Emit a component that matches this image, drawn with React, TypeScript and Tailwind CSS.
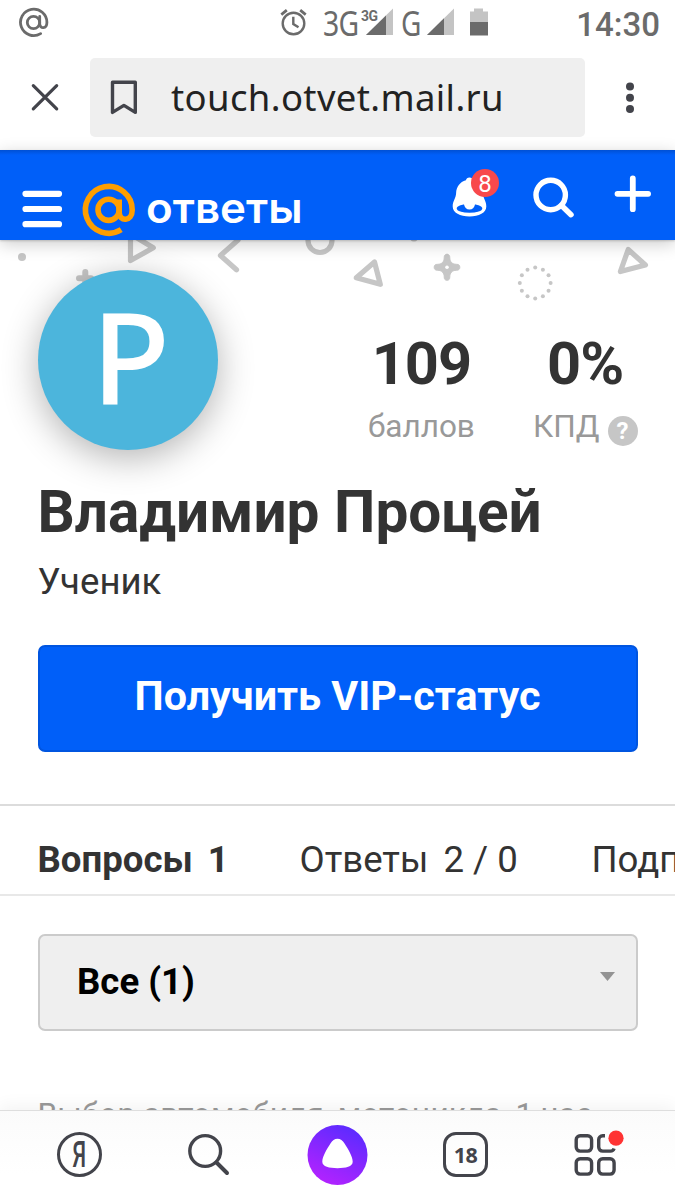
const STATUS = '#6b6b6b';
const INK = '#43444b';

function StatusBar() {
  return (
    <div className="flex h-[46px] shrink-0 items-center text-[#6b6b6b]">
      <svg className="ml-[18px] shrink-0" width="32" height="46" viewBox="0 0 32 46" fill="none" stroke={STATUS} strokeWidth="2.8" strokeLinecap="round">
        <circle cx="15.5" cy="22.5" r="6.2" />
        <path d="M21.7 16.4V23.6c0 5.6 7.2 5.6 7.2-1.1A13.2 13.2 0 1 0 22.6 33.6" />
      </svg>
      <svg className="ml-[229px] shrink-0" width="30" height="46" viewBox="279 0 30 46" fill="none" stroke={STATUS} strokeWidth="2.4">
        <circle cx="293.5" cy="23.5" r="10.8" />
        <path d="M293.3 16.8v7.2l5.2 3.2" />
        <path d="M281.3 14.6l5.5-4.4M305.7 14.6l-5.5-4.4" strokeWidth="2.8" />
      </svg>
      <span className="ml-[14px] w-[38px] shrink-0 text-[35px] leading-[46px]">
        <span className="block w-[50px] origin-left scale-x-[0.81] font-['Noto_Sans'] tracking-[-1px]">3G</span>
      </span>
      <span className="z-10 -mt-[15px] w-[16px] shrink-0 text-[15.5px] leading-[16px] font-bold tracking-[-0.5px]">
        <span className="block origin-left scale-x-90">3G</span>
      </span>
      <svg className="-ml-[11px] shrink-0" width="28" height="46" viewBox="366 0 28 46">
        <path d="M393 8.5V35h-27z" fill="#c4c4c4" />
        <path d="M386 15.5V35h-20z" fill={STATUS} />
      </svg>
      <span className="ml-[7px] w-[22px] shrink-0 text-[35px] leading-[46px]">
        <span className="block w-[28px] origin-left scale-x-[0.8] font-['Noto_Sans']">G</span>
      </span>
      <svg className="ml-[4px] shrink-0" width="63" height="46" viewBox="426 0 63 46">
        <path d="M453 8.5V35h-27z" fill="#c4c4c4" />
        <path d="M443 18.2V35h-17z" fill={STATUS} />
        <path d="M469 11.5h4v-3h9v3h5V22h-18z" fill="#c4c4c4" />
        <path d="M469 22h18v13.5h-18z" fill={STATUS} />
      </svg>
      <span className="mr-[15px] ml-auto pt-[3px] text-[33px] leading-[46px] font-medium">14:30</span>
    </div>
  );
}

function AddressBar() {
  return (
    <div className="flex h-[104px] shrink-0 items-start pt-[12px]">
      <svg className="ml-[30px] shrink-0" width="30" height="79" viewBox="30 58 30 79" fill="none" stroke={INK} strokeWidth="3.2" strokeLinecap="round">
        <path d="M33.3 85.6l23.4 23.2M56.7 85.6l-23.4 23.2" />
      </svg>
      <div className="ml-[30px] flex h-[79px] w-[495px] shrink-0 items-center rounded-[5px] bg-[#efefef]">
        <svg className="ml-[20px] shrink-0" width="28" height="36" viewBox="110 80 28 36" fill="none" stroke={INK} strokeWidth="3.4" strokeLinejoin="round">
          <path d="M112.5 82.2h22.8v30.2l-11.4-7-11.4 7z" />
        </svg>
        <span className="ml-[33px] font-['Noto_Sans'] text-[36.5px] leading-[79px] tracking-[0.37px] text-[#222]">touch.otvet.mail.ru</span>
      </div>
      <svg className="ml-[39px] shrink-0" width="12" height="79" viewBox="624 58 12 79" fill={INK}>
        <circle cx="630" cy="86.5" r="4" />
        <circle cx="630" cy="97.7" r="4" />
        <circle cx="630" cy="109" r="4" />
      </svg>
    </div>
  );
}

function SiteHeader() {
  return (
    <div className="relative z-10 flex h-[90px] shrink-0 items-start bg-[linear-gradient(to_bottom,#0050d4,#005ff9_5px)] shadow-[0_4px_16px_rgba(0,0,0,0.2),0_1px_2px_rgba(0,0,0,0.18)]">
      <svg className="shrink-0" width="140" height="90" viewBox="0 150 140 90" fill="none">
        <path d="M25.5 193.8h33.5M25.5 209h33.5M25.5 224.2h33.5" stroke="#fff" strokeWidth="6.2" strokeLinecap="round" />
        <g stroke="#ff9e00" strokeWidth="5.6">
          <circle cx="108.6" cy="209.8" r="10.6" />
          <path d="M119.2 199.5v13c0 9.4 13 9.4 13-2.6a23.4 23.4 0 1 0-11 19.8" />
        </g>
      </svg>
      <span className="ml-[6px] w-[170px] pt-[30px] font-['Inter'] text-[42px] leading-[56px] font-semibold text-white">
        <span className="inline-block origin-left scale-x-[1.045]">ответы</span>
      </span>
      <div className="relative ml-auto h-[90px] w-[235px]">
        <svg width="235" height="90" viewBox="440 150 235 90" fill="none">
          <path fill="#fff" d="M469.5 177.5c2.1 0 3.2 1.2 3.6 2.8 6 1.8 9.6 6.4 9.8 13 .2 5.2 3.4 7.7 3.4 13.2 0 6.2-7.4 10-16.8 10s-16.8-3.8-16.8-10c0-5.5 3.2-8 3.4-13.2.2-6.6 3.8-11.2 9.8-13 .4-1.6 1.5-2.8 3.6-2.8z" />
          <ellipse cx="469.5" cy="208.4" rx="12.8" ry="4.3" fill="#005ff9" />
          <circle cx="469.5" cy="204.2" r="5.4" fill="#fff" />
          <circle cx="550.7" cy="195" r="14.7" stroke="#fff" strokeWidth="5.4" />
          <path d="M561.5 205.5l9.5 9.2" stroke="#fff" strokeWidth="5.5" strokeLinecap="round" />
          <path d="M617.5 193.8h30.6M632.8 178.4v30.8" stroke="#fff" strokeWidth="5.8" strokeLinecap="round" />
        </svg>
        <span className="absolute top-[19px] left-[31px] flex h-[28px] w-[28px] items-center justify-center rounded-full bg-[#f8494c] pt-[2px] text-[24px] leading-[28px] text-white">8</span>
      </div>
    </div>
  );
}

const DOTS = Array.from({ length: 12 }, (_, i) => {
  const a = (i * Math.PI) / 6;
  return [535.2 + 15.4 * Math.sin(a), 283 - 15.4 * Math.cos(a)];
});

function Confetti() {
  return (
    <svg className="absolute top-0 left-0" width="675" height="80" viewBox="0 240 675 80" fill="none" stroke="#c6c6c6" strokeWidth="5.2" strokeLinecap="round" strokeLinejoin="round">
      <circle cx="22" cy="257" r="4" fill="#c6c6c6" stroke="none" />
      <path d="M130.5 234v26.6l22.8-12.8z" />
      <path d="M238 240l-17.5 15.5 16 14.2" />
      <circle cx="320" cy="240.5" r="12" />
      <path d="M374.5 262l5.8 22.3-24-6.5z" />
      <path d="M628.2 249.5l17.2 15.5-25 6.5z" />
      <path d="M85.3 272v10M79 278.3h12" strokeWidth="6" />
      <path fill="#c6c6c6" strokeWidth="1" d="M447 254.3c2 0 2.8 1.2 2.8 3.5 0 4 2.5 6.5 6.5 6.5 2.5 0 3.5 1.1 3.5 3s-1 3-3.5 3c-4 0-6.5 2.5-6.5 6.5 0 2.3-.8 3.5-2.8 3.5s-2.8-1.2-2.8-3.5c0-4-2.5-6.5-6.5-6.5-2.5 0-3.5-1.1-3.5-3s1-3 3.5-3c4 0 6.5-2.5 6.5-6.5 0-2.3.8-3.5 2.8-3.5z" />
      <circle cx="447" cy="267.3" r="1.8" fill="#fff" stroke="none" />
      <circle cx="414" cy="237.5" r="4" fill="#c6c6c6" stroke="none" />
      {DOTS.map(([x, y], i) => (
        <circle key={i} cx={x} cy={y} r="2" fill="#c6c6c6" stroke="none" />
      ))}
    </svg>
  );
}

function Profile() {
  return (
    <div className="relative flex h-[566px] shrink-0 flex-col border-b-2 border-[#dcdcdc] px-[37.5px] pt-[30px] text-[#333]">
      <Confetti />
      <div className="relative flex h-[180px] items-start">
        <div className="flex h-[180px] w-[180px] justify-center rounded-full bg-[#4cb5dc] pt-[6px] shadow-[0_8px_36px_rgba(0,0,0,0.3)]">
          <span className="mr-[-7px] scale-x-[1.02] font-['Noto_Sans'] text-[127px] leading-[160px] font-medium text-white">P</span>
        </div>
        <div className="mt-[63.5px] ml-auto flex flex-col items-center">
          <span className="text-[59.5px] leading-[60px] font-bold tracking-[-1px]">109</span>
          <span className="mt-[17.5px] text-[31.5px] leading-[32px] text-[#999]">баллов</span>
        </div>
        <div className="mt-[63.5px] ml-[58px] flex flex-col items-center">
          <span className="text-[59.5px] leading-[60px] font-bold tracking-[-0.8px]">0%</span>
          <span className="mt-[17.5px] flex text-[31.6px] leading-[32px] text-[#999]">
            КПД
            <span className="mt-[5px] ml-[8px] flex h-[30px] w-[30px] items-center justify-center rounded-full bg-[#c6c6c6] text-[24px] leading-[30px] font-bold text-white">?</span>
          </span>
        </div>
      </div>
      <h1 className="relative mt-[32.3px] text-[58.5px] leading-[60px] font-bold whitespace-nowrap">Владимир Процей</h1>
      <p className="mt-[19.2px] text-[36.6px] leading-[42px]">Ученик</p>
      <button className="mt-[41.5px] h-[107px] shrink-0 rounded-[7px] border-2 border-[#0055e0] bg-[#005ff9] pb-[4px] text-[41.25px] leading-[48px] font-bold text-white">Получить VIP-статус</button>
    </div>
  );
}

function Tabs() {
  return (
    <div className="flex h-[90px] shrink-0 overflow-hidden border-b-2 border-[#e8e8e8] pt-[34px] pl-[37.5px] text-[36.6px] leading-[40px] whitespace-nowrap text-[#333]">
      <span className="w-[262px] shrink-0 font-bold">Вопросы<span className="ml-[15px]">1</span></span>
      <span className="w-[292px] shrink-0">Ответы<span className="ml-[15px]">2 / 0</span></span>
      <span className="shrink-0">Подписки</span>
    </div>
  );
}

function BottomBar() {
  return (
    <div className="relative z-10 flex h-[90px] shrink-0 items-center border-t border-[#dedede] bg-linear-to-b from-[#fbfbfb] to-white to-70% pb-[2px] shadow-[0_-4px_16px_rgba(0,0,0,0.05)]">
      <div className="ml-[57px] flex h-[45px] w-[45px] shrink-0 items-center justify-center rounded-full border-[3px] border-[#43444b] text-[37px] leading-[40px] text-[#43444b]">
        <span className="block scale-x-[0.6] font-medium">Я</span>
      </div>
      <svg className="ml-[85px] shrink-0" width="44" height="90" viewBox="187 1110 44 90" fill="none" stroke={INK} strokeLinecap="round">
        <circle cx="205.2" cy="1151" r="15.4" strokeWidth="3.4" />
        <path d="M216.5 1162.5l10.5 10.5" strokeWidth="4" />
      </svg>
      <svg className="ml-[76px] shrink-0" width="61" height="90" viewBox="307 1110 61 90">
        <defs>
          <linearGradient id="alice" x1="0.2" y1="1" x2="0.7" y2="0">
            <stop offset="0" stopColor="#b822ff" />
            <stop offset="1" stopColor="#5a2bff" />
          </linearGradient>
        </defs>
        <circle cx="337.5" cy="1155" r="30" fill="url(#alice)" />
        <path d="M337.5 1138.8c3 0 5 1.6 7.2 5 3 4.7 8 12.5 8 18 0 5-7 6.4-15.2 6.4s-15.2-1.4-15.2-6.4c0-5.5 5-13.3 8-18 2.2-3.4 4.2-5 7.2-5z" fill="#fff" />
      </svg>
      <div className="ml-[75px] flex h-[45px] w-[45px] shrink-0 items-center justify-center rounded-[13px] border-[3px] border-[#43444b] font-['Noto_Sans'] text-[21.5px] leading-[30px] font-bold tracking-[-0.5px] text-[#43444b]">18</div>
      <svg className="ml-[86px] shrink-0" width="54" height="90" viewBox="574 1110 54 90" fill="none" stroke={INK} strokeWidth="3.4">
        <rect x="576.2" y="1135.7" width="15.4" height="15.4" rx="4" />
        <rect x="576.2" y="1158.7" width="15.4" height="15.4" rx="4" />
        <rect x="598.7" y="1158.7" width="15.4" height="15.4" rx="4" />
        <path d="M605 1135.7h-2.3a4 4 0 0 0-4 4v7.4a4 4 0 0 0 4 4h7.4a4 4 0 0 0 4-2.6" />
        <circle cx="616" cy="1138.2" r="7.6" fill="#ff3333" stroke="none" />
      </svg>
    </div>
  );
}

export default function App() {
  return (
    <div className="flex h-[1200px] w-[675px] flex-col overflow-hidden bg-white font-['Roboto',sans-serif]">
      <StatusBar />
      <AddressBar />
      <SiteHeader />
      <Profile />
      <Tabs />
      <div className="min-h-0 flex-1 overflow-hidden px-[37.5px] pt-[38px]">
        <div className="flex h-[97px] items-center justify-between rounded-[7px] border-2 border-[#cbcbcb] bg-[#efefef] pr-[21px] pb-[1px] pl-[37.5px]">
          <span className="text-[36.6px] leading-[44px] font-bold text-black">Все (1)</span>
          <svg className="mb-[12px]" width="15" height="9" viewBox="0 0 15 9">
            <path d="M0 0h15L7.5 9z" fill="#939393" />
          </svg>
        </div>
        <p className="mt-[64px] text-[31.7px] leading-[40px] whitespace-nowrap text-[#999]">Выбор автомобиля, мотоцикла, 1 час</p>
      </div>
      <BottomBar />
    </div>
  );
}
